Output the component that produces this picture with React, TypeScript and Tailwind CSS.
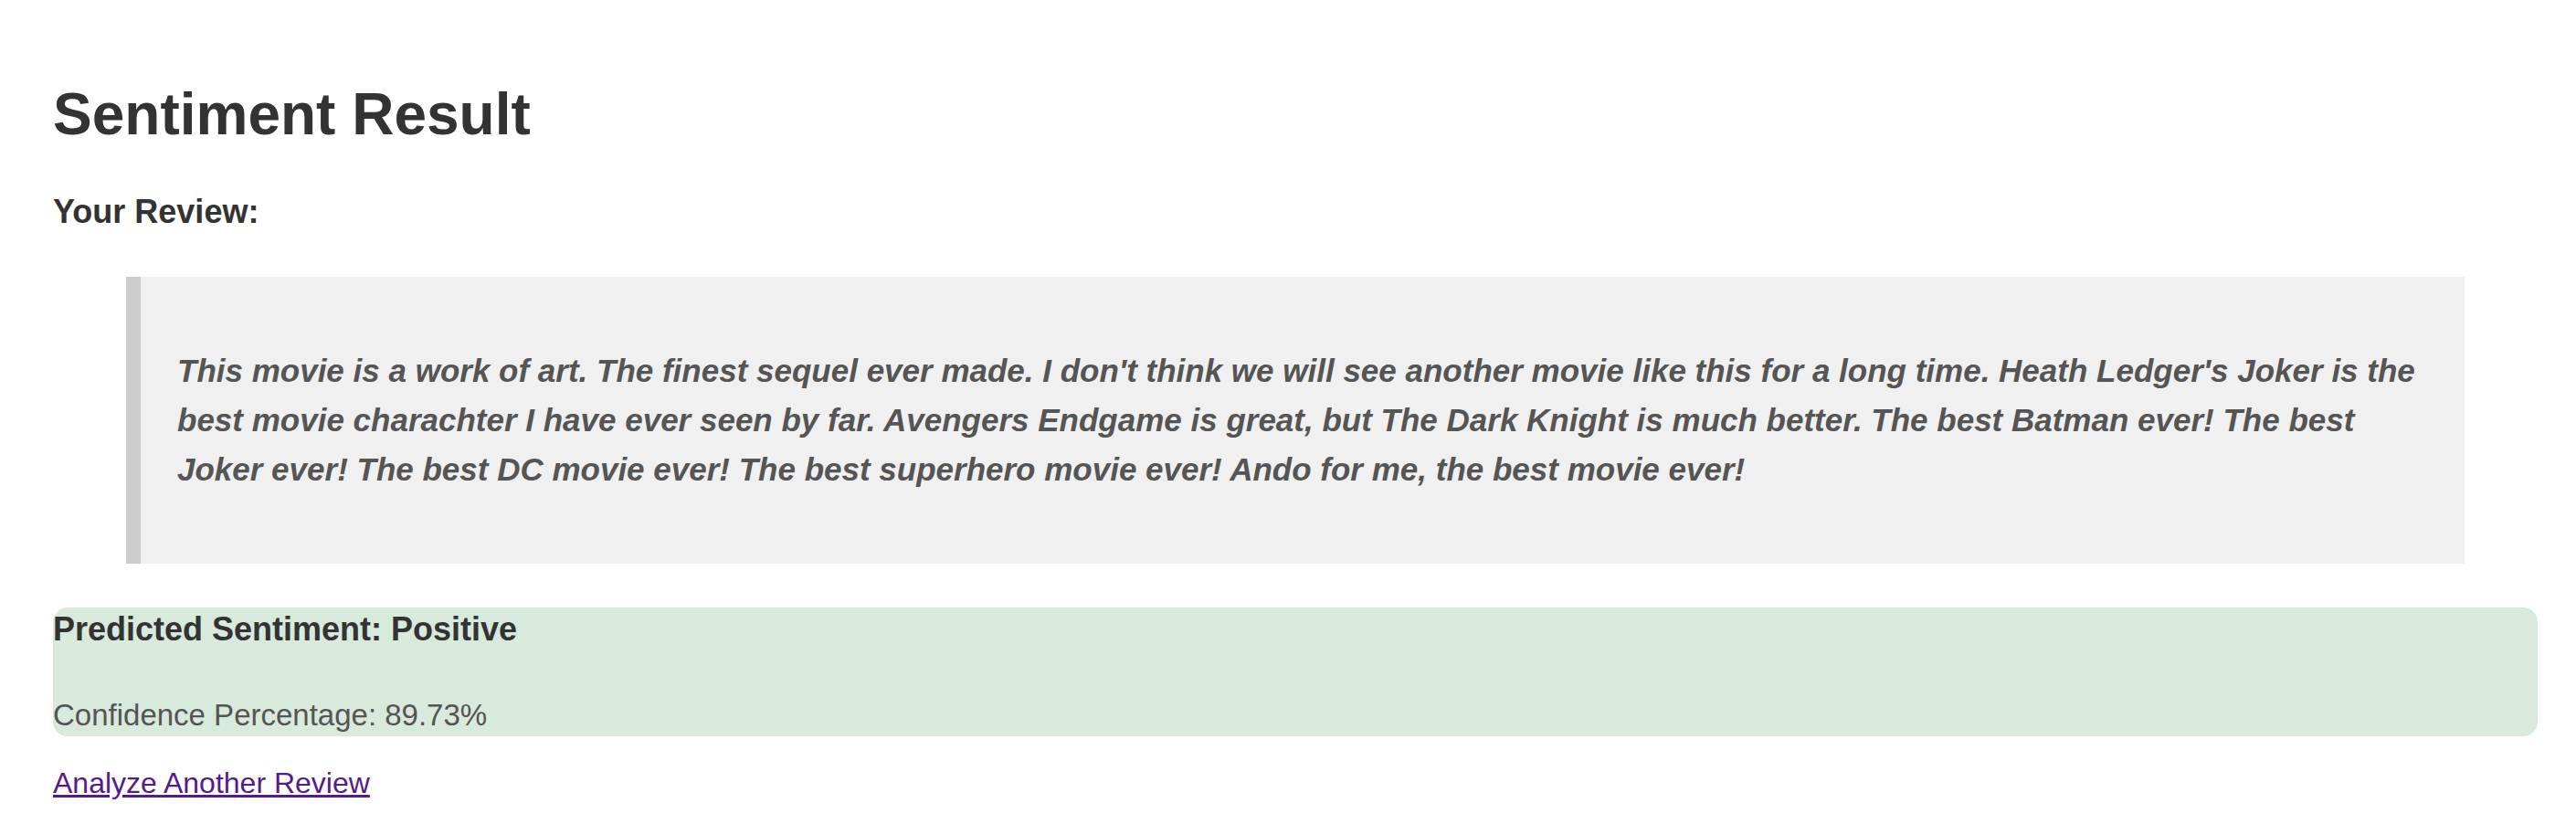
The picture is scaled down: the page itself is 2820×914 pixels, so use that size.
import React from "react";

export default function App() {
  return (
    <div
      className="min-h-[914px] w-[2820px] bg-white pl-[58px] pr-[42px] pt-[89px] text-[#333]"
      style={{ fontFamily: '"Liberation Sans", Arial, Helvetica, sans-serif' }}
    >
      <h1 className="m-0 text-[64px] font-bold leading-[72px] text-[#333]">Sentiment Result</h1>
      <h3 className="mt-[51px] text-[36px] font-bold leading-[40px] text-[#333]">Your Review:</h3>
      <blockquote className="mx-[80px] mt-[51px] border-l-[16px] border-[#ccc] bg-[#f0f0f0] px-[40px] py-[76px]">
        <p className="m-0 text-[35px] font-bold italic leading-[54px] text-[#555]">
          This movie is a work of art. The finest sequel ever made. I don't think we will see another movie like this for a long time. Heath Ledger's Joker is the best movie charachter I have ever seen by far. Avengers Endgame is great, but The Dark Knight is much better. The best Batman ever! The best Joker ever! The best DC movie ever! The best superhero movie ever! Ando for me, the best movie ever!
        </p>
      </blockquote>
      <div className="mt-[48px] rounded-[16px] bg-[#d8eadc] pb-[2px]">
        <h3 className="m-0 text-[36px] font-bold leading-[48px] text-[#333]">Predicted Sentiment: Positive</h3>
        <p className="mt-[48px] text-[33px] leading-[43px] text-[#555]">Confidence Percentage: 89.73%</p>
      </div>
      <a href="#" className="mt-[31px] block w-fit text-[32px] leading-[40px] text-[#551a8b] underline">
        Analyze Another Review
      </a>
    </div>
  );
}
